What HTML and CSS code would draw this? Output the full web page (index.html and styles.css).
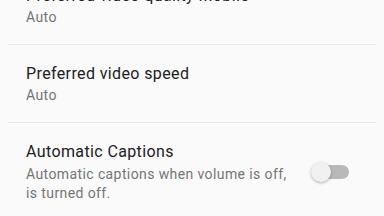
FILE: index.html
```html
<!DOCTYPE html>
<html lang="en">
<head>
  <meta charset="UTF-8">
  <meta name="viewport" content="width=device-width, initial-scale=1.0">
  <title>Settings - General</title>
  <link rel="stylesheet" href="styles.css">
</head>
<body>

  <div class="settings-list">
    <div class="item">
      <div class="text">
        <div class="title">Preferred video quality Mobile</div>
        <div class="sub">Auto</div>
      </div>
    </div>

    <div class="item">
      <div class="text">
        <div class="title">Preferred video speed</div>
        <div class="sub">Auto</div>
      </div>
    </div>

    <div class="item item-toggle">
      <div class="text">
        <div class="title">Automatic Captions</div>
        <div class="sub">Automatic captions when volume is off, is turned off.</div>
      </div>
      <div class="switch">
        <div class="track"></div>
        <div class="thumb"></div>
      </div>
    </div>
  </div>

</body>
</html>
```

FILE: styles.css
```css
body {
  margin: 0;
  background-color: #fafafa;
  font-family: Roboto, "Noto Sans", Arial, sans-serif;
  overflow: hidden;
}
.settings-list {
  margin-top: -33px;
}
.item {
  display: flex;
  align-items: center;
  margin: 0 8px;
  padding: 19px 27px 17px 18px;
  border-bottom: 1px solid #e8e8e8;
}
.item:last-child {
  border-bottom: none;
}
.text {
  flex: 1;
}
.title {
  font-size: 16px;
  line-height: 20px;
  letter-spacing: 0.38px;
  color: #212121;
}
.sub {
  margin-top: 1px;
  font-size: 14px;
  line-height: 20px;
  letter-spacing: 0.4px;
  color: #757575;
}
.item-toggle {
  gap: 18px;
}
.item-toggle .sub {
  margin-top: 3px;
  line-height: 18.5px;
}

/* off state switch */
.switch {
  position: relative;
  width: 38px;
  height: 20px;
  flex-shrink: 0;
}
.track {
  position: absolute;
  left: 3px;
  right: 0;
  top: 3px;
  height: 14px;
  border-radius: 7px;
  background-color: #b9b9b9;
}
.thumb {
  position: absolute;
  left: 0;
  top: 0;
  width: 20px;
  height: 20px;
  border-radius: 50%;
  background-color: #f1f1f1;
  box-shadow: 0 1px 3px rgba(0, 0, 0, 0.3);
}
```
